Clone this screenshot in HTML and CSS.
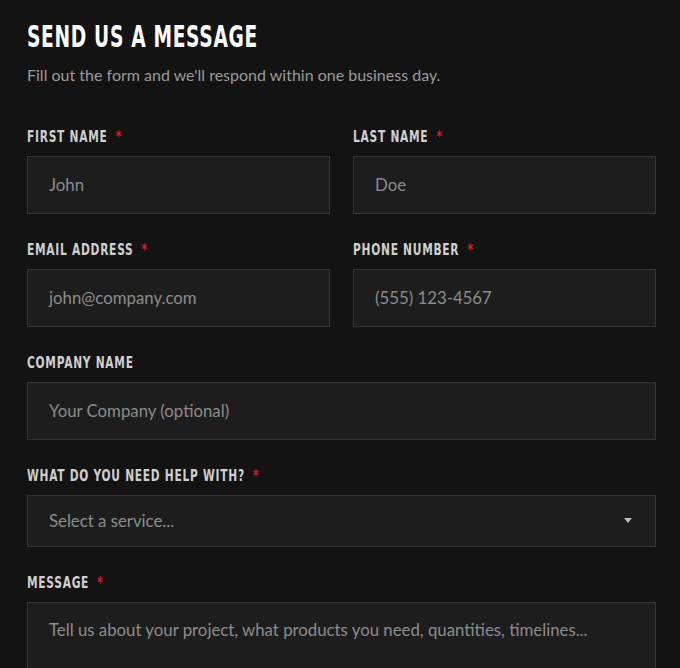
FILE: index.html
```html
<!DOCTYPE html>
<html lang="en">
<head>
<meta charset="utf-8">
<title>Send us a message</title>
<link rel="stylesheet" href="styles.css">
</head>
<body>
<section class="contact">
  <h1 class="title">Send us a message</h1>
  <p class="lead">Fill out the form and we'll respond within one business day.</p>
  <form class="form">
    <div class="row">
      <div class="field">
        <label class="label">First name <span class="req">*</span></label>
        <div class="input">John</div>
      </div>
      <div class="field">
        <label class="label">Last name <span class="req">*</span></label>
        <div class="input">Doe</div>
      </div>
    </div>
    <div class="row">
      <div class="field">
        <label class="label">Email address <span class="req">*</span></label>
        <div class="input">john@company.com</div>
      </div>
      <div class="field">
        <label class="label">Phone number <span class="req">*</span></label>
        <div class="input">(555) 123-4567</div>
      </div>
    </div>
    <div class="field">
      <label class="label">Company name</label>
      <div class="input">Your Company (optional)</div>
    </div>
    <div class="field">
      <label class="label">What do you need help with? <span class="req">*</span></label>
      <div class="input select">
        <span>Select a service...</span>
        <svg class="caret" width="8" height="5" viewBox="0 0 8 5"><path d="M0 0h8L4 5z" fill="#bbbbbb"/></svg>
      </div>
    </div>
    <div class="field">
      <label class="label">Message <span class="req">*</span></label>
      <div class="input textarea">Tell us about your project, what products you need, quantities, timelines...</div>
    </div>
  </form>
</section>
</body>
</html>
```
FILE: styles.css
```css
html, body {
  margin: 0;
  background: #131313;
}
body {
  font-family: Lato, "Open Sans", sans-serif;
  color: #8a8a8a;
}
.contact {
  padding: 20px 24px 0 27px;
}
.title {
  margin: 0;
  font-family: "DejaVu Sans Condensed", "DejaVu Sans", sans-serif;
  font-weight: 700;
  font-size: 30px;
  line-height: 34px;
  letter-spacing: 1px;
  text-transform: uppercase;
  color: #ffffff;
  transform: scaleX(0.69);
  transform-origin: 0 50%;
  white-space: nowrap;
}
.lead {
  margin: 9px 0 0;
  font-size: 16px;
  line-height: 24px;
  color: #9a9a9a;
}
.form {
  margin-top: 39px;
  display: flex;
  flex-direction: column;
  gap: 25px;
}
.row {
  display: grid;
  grid-template-columns: 1fr 1fr;
  column-gap: 23px;
}
.field {
  display: flex;
  flex-direction: column;
  gap: 8px;
}
.label {
  font-family: "DejaVu Sans Condensed", "DejaVu Sans", sans-serif;
  font-weight: 700;
  font-size: 16px;
  line-height: 22px;
  letter-spacing: 1px;
  text-transform: uppercase;
  color: #cfcfcf;
  transform: scaleX(0.74);
  transform-origin: 0 50%;
  white-space: nowrap;
}
.req {
  color: #d0202a;
  margin-left: 5px;
}
.input {
  box-sizing: border-box;
  height: 58px;
  display: flex;
  align-items: center;
  padding: 0 21px 2px;
  background: #1d1d1d;
  border: 1px solid #353535;
  font-size: 16.8px;
  color: #8c8c8c;
}
.select {
  height: 52px;
  justify-content: space-between;
  padding-right: 23px;
}
.textarea {
  height: 140px;
  align-items: flex-start;
  padding-top: 16px;
}
```
